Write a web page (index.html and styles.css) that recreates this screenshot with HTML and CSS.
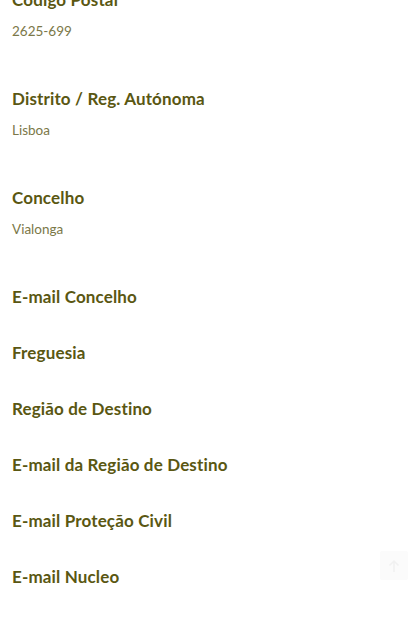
FILE: index.html
```html
<!DOCTYPE html>
<html lang="pt">

<head>
    <meta charset="UTF-8">
    <meta name="viewport" content="width=device-width, initial-scale=1.0">
    <title>Detalhes da Localização</title>
    <link rel="stylesheet" href="styles.css">
</head>

<body>
    <div class="details">
        <div class="field">
            <div class="field-label">Código Postal</div>
            <div class="field-value">2625-699</div>
        </div>
        <div class="field">
            <div class="field-label">Distrito / Reg. Autónoma</div>
            <div class="field-value">Lisboa</div>
        </div>
        <div class="field">
            <div class="field-label">Concelho</div>
            <div class="field-value">Vialonga</div>
        </div>
        <div class="field">
            <div class="field-label">E-mail Concelho</div>
        </div>
        <div class="field">
            <div class="field-label">Freguesia</div>
        </div>
        <div class="field">
            <div class="field-label">Região de Destino</div>
        </div>
        <div class="field">
            <div class="field-label">E-mail da Região de Destino</div>
        </div>
        <div class="field">
            <div class="field-label">E-mail Proteção Civil</div>
        </div>
        <div class="field">
            <div class="field-label">E-mail Nucleo</div>
        </div>
    </div>

    <a class="to-top" href="#" aria-label="Voltar ao topo">
        <svg width="12" height="14" viewBox="0 0 12 14" fill="none" stroke="currentColor" stroke-width="1.5">
            <path d="M6 13V2M1.5 6.5L6 2l4.5 4.5" />
        </svg>
    </a>
</body>

</html>
```

FILE: styles.css
```css
:root {
    --label-color: #5a5712;
    --value-color: #7b7848;
    --background-color: #ffffff;
}

body * {
    box-sizing: border-box;
}

body {
    margin: 0;
    padding: 0 12px;
    background-color: var(--background-color);
    font-family: "Lato", "Open Sans", sans-serif;
    overflow: hidden;
}

.details {
    display: flex;
    flex-direction: column;
    gap: 32px;
    margin-top: -12px;
}

.field-label {
    font-size: 17px;
    font-weight: 700;
    line-height: 24px;
    letter-spacing: 0.15px;
    color: var(--label-color);
}

.field-value {
    font-size: 13.5px;
    line-height: 18px;
    margin: 10px 0 15px;
    color: var(--value-color);
}

.to-top {
    position: fixed;
    right: 3px;
    bottom: 44px;
    width: 28px;
    height: 29px;
    display: flex;
    align-items: center;
    justify-content: center;
    background: #fbfbfb;
    color: #f1f1f1;
    border-radius: 2px;
}
```
